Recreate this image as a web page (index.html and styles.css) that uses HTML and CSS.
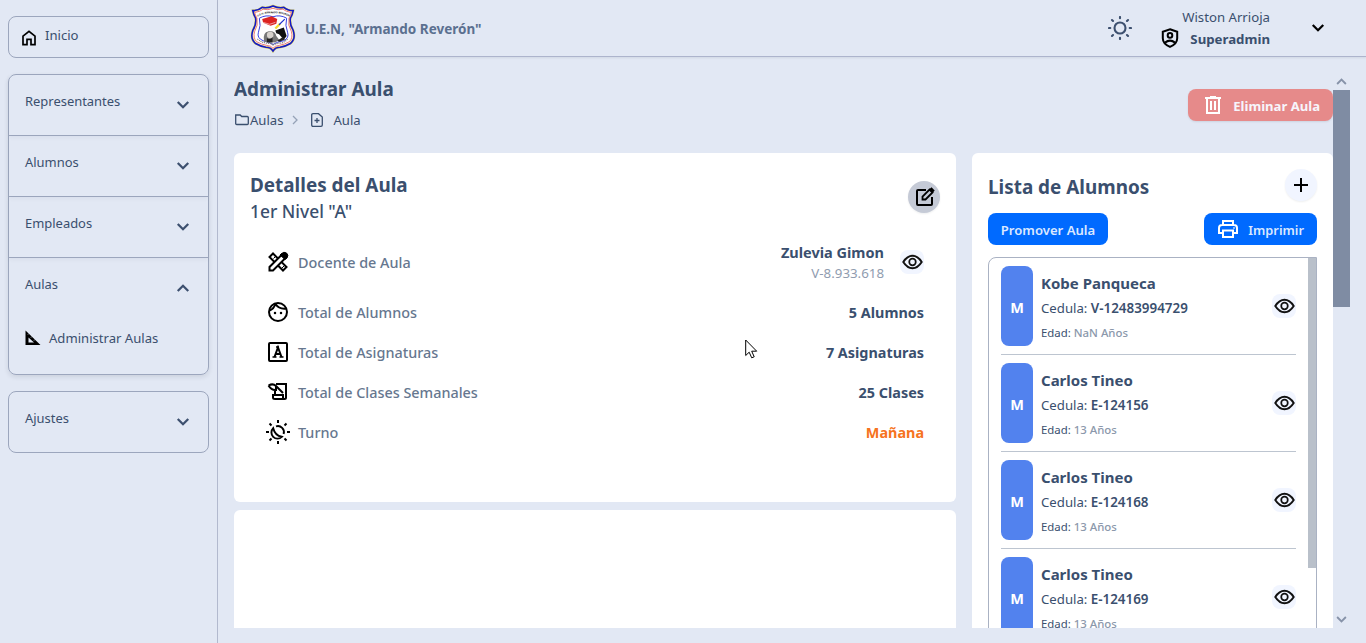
FILE: index.html
```html
<!DOCTYPE html>
<html lang="es">
<head>
<meta charset="utf-8">
<title>Administrar Aula</title>
<link rel="stylesheet" href="styles.css">
</head>
<body>
<svg class="defs" aria-hidden="true">
  <symbol id="down" viewBox="0 0 24 24"><path d="M5 8l7 7 7-7" fill="none" stroke="currentColor" stroke-width="3"/></symbol>
  <symbol id="eye" viewBox="0 0 32 24"><path d="M2 12Q8 2.500 16 2.500T30 12Q24 21.500 16 21.500T2 12Z" fill="none" stroke="currentColor" stroke-width="3"/><circle cx="16" cy="12" r="5" fill="none" stroke="currentColor" stroke-width="2.600"/></symbol>
</svg>
<div class="app">
  <aside class="sidebar">
    <a class="home">
      <svg class="i16" viewBox="0 0 16 16"><path d="M2 6.1L8 1.3l6 4.8v8.6h-4V9.3H6v5.4H2z" fill="none" stroke="#000" stroke-width="1.7"/></svg>
      <span>Inicio</span>
    </a>
    <nav class="accordion">
      <div class="item"><span>Representantes</span><svg class="chev"><use href="#down"/></svg></div>
      <div class="item"><span>Alumnos</span><svg class="chev"><use href="#down"/></svg></div>
      <div class="item"><span>Empleados</span><svg class="chev"><use href="#down"/></svg></div>
      <div class="item open"><span>Aulas</span><svg class="chev up"><use href="#down"/></svg></div>
      <div class="sub"><svg class="i16" viewBox="0 0 16 16"><path d="M.5 .5V15h15zM3.500 7.500l5.500 5h-5.500z" fill="#000" fill-rule="evenodd"/><path d="M3 4.500l1-1M6 7.500l1-1M9 10.500l1-1" stroke="#e2e8f4" stroke-width=".8"/></svg><span>Administrar Aulas</span></div>
    </nav>
    <div class="item single"><span>Ajustes</span><svg class="chev"><use href="#down"/></svg></div>
  </aside>
  <div class="page">
    <header class="topbar">
      <svg class="crest" viewBox="-1 0 49 50">
        <path d="M2 6Q8 6 12 2.500Q17 4 23.500 1Q30 4 35 2.500Q39 6 45 6Q44 11 42 14Q41 21 45 27Q48 36 42 41Q37 44 31 45Q26 45 23.500 49Q21 45 16 45Q10 44 5 41Q-1 36 2 27Q6 21 5 14Q3 11 2 6Z" fill="#fff" stroke="#e8e35e" stroke-width="2.600"/>
        <path d="M2 6Q8 6 12 2.500Q17 4 23.500 1Q30 4 35 2.500Q39 6 45 6Q44 11 42 14Q41 21 45 27Q48 36 42 41Q37 44 31 45Q26 45 23.500 49Q21 45 16 45Q10 44 5 41Q-1 36 2 27Q6 21 5 14Q3 11 2 6Z" fill="none" stroke="#1519ca" stroke-width="1.700"/>
        <path d="M4 8Q10 7 13 4.500Q18 6 23.500 3.500Q29 6 34 4.500Q37 7 43 8Q42 12 40.500 14Q39 22 43 28Q45 35 41 39Q36 42 30 43Q26 43 23.500 46Q21 43 17 43Q11 42 6 39Q2 35 4 28Q8 22 6.500 14Q5 12 4 8Z" fill="#fff" stroke="#e54b56" stroke-width=".8"/>
        <path d="M9 14Q16 10 23.500 12.500Q31 10 38 14Q36 22 39 29Q41 35 35 38Q28 39 23.500 42Q19 39 13 38Q6 35 8 29Q11 22 9 14Z" fill="#fff" stroke="#2a35e0" stroke-width="1"/>
        <path d="M12 15l10-3 6 3-1 5-6 2-8-3z" fill="#dd2321"/><path d="M13 18.500l7 2 6-2" fill="none" stroke="#fff" stroke-width=".6"/>
        <path d="M26 25l5-5" stroke="#f3db30" stroke-width="2.400"/><path d="M30 21l6-6" stroke="#1c2ecf" stroke-width="1.200"/>
        <path d="M26 27l9-3 3 9-3 4-5-6-3-1z" fill="#101112"/>
        <path d="M14 39q-2-10 5-11t8 5l3 4-4 3z" fill="#777"/><circle cx="20.500" cy="32" r="3.500" fill="#d7d2cd"/><path d="M17 35q4 3 6-1v6h-6zM28 38l6-4 2 3-6 2z" fill="#222"/>
        <path id="arc" d="M7 12.500Q15 8 23.500 9Q32 8 41 12.500" fill="none"/><text class="crest-text"><textPath href="#arc">U.E.N. ARMANDO REVERON</textPath></text>
        <path d="M7 36q4 4 10 4.500t6.500 2q4-2 8-2t8-5" fill="none" stroke="#777" stroke-width="1.200" stroke-dasharray="1.200 .8"/>
      </svg>
      <strong class="school">U.E.N, "Armando Reverón"</strong>
      <svg class="sun" viewBox="0 0 24 24"><circle cx="12" cy="12" r="5.500"/><path d="M12 1v1.300M12 21.700v1.300M1 12h1.300M21.700 12h1.300M4 4l1 1M19 19l1 1M4 20l1-1M19 5l1-1"/></svg>
      <div class="user">
        <span class="user-name">Wiston Arrioja</span>
        <div class="role"><svg viewBox="0 0 18 20"><path d="M9 1.200l7.200 2.500v6.500q0 5.500-7.200 8.600-7.200-3.100-7.200-8.600V3.700z"/><circle cx="9" cy="7.400" r="2.300"/><path d="M4 14.600q5-4 10 0"/></svg><strong>Superadmin</strong></div>
      </div>
      <svg class="user-chev"><use href="#down"/></svg>
    </header>
    <main class="scroller">
      <div class="content">
        <div class="heading">
          <div>
            <h1>Administrar Aula</h1>
            <div class="crumbs">
              <svg class="folder" viewBox="0 0 14 12"><path d="M.7 10V1h4.500l1.500 1.500h5.600q1 0 1 1V9.500q0 1-1 1H1.700q-1 0-1-1z"/></svg><span>Aulas</span>
              <svg class="sep" viewBox="0 0 6 10"><path d="M1 1l4 4-4 4"/></svg>
              <svg class="doc" viewBox="0 0 12 14"><path d="M2 .7h5.500L11.300 4v8q0 1.300-1.300 1.300H2Q.7 13.300.7 12V2Q.7.7 2 .7zM6 5v5M3.500 7.500h5"/></svg><span>Aula</span>
            </div>
          </div>
          <button class="btn danger"><svg class="trash" viewBox="0 0 16 18"><path d="M0 2h16M5 1h6M2 2v15h12V2M6 5v9M10 5v9"/></svg><span>Eliminar Aula</span></button>
        </div>
        <div class="grid">
          <div class="left">
            <section class="card details">
              <div class="card-head">
                <div><h2>Detalles del Aula</h2><p>1er Nivel "A"</p></div>
                <span class="round edit"><svg viewBox="0 0 20 20"><path d="M11 3H3Q2 3 2 4v13q0 1 1 1H16q1 0 1-1V10" fill="none" stroke="#000" stroke-width="2"/><path d="M7.500 12.500v-3l7-7 3 3-7 7z" fill="#c5cad6" stroke="#000" stroke-width="1.800"/><path d="M14 2.500L16.500 .3l3.200 3.200L17.500 6z"/></svg></span>
              </div>
              <dl>
                <div class="row tall">
                  <dt><svg viewBox="0 0 24 24"><g fill="#fff" stroke="#000" stroke-width="2"><path d="M7 3.500L3.500 7 17 20.500l3.500-3.500z"/><path d="M3.500 20.500v-3.500L16 4.500l3.500 3.500L7 20.500z"/></g><path d="M15 4q3-3 5.500-1t.5 5l-2 1.500L14 5zM7.500 8.500l2-2M16 18l2-2" stroke="#000"/></svg>Docente de Aula</dt>
                  <dd class="teacher"><span><b>Zulevia Gimon</b><small>V-8.933.618</small></span><span class="eye"><svg><use href="#eye"/></svg></span></dd>
                </div>
                <div class="row"><dt><svg viewBox="0 0 24 24"><g fill="none" stroke="#000" stroke-width="2"><circle cx="12" cy="12" r="9"/><path d="M9.500 3.500Q8 9 3.500 10.500M9.500 4Q13 9.500 20.500 8.500"/></g><circle cx="9" cy="13" r="1.250"/><circle cx="15" cy="13" r="1.250"/></svg>Total de Alumnos</dt><dd>5 Alumnos</dd></div>
                <div class="row"><dt><svg viewBox="0 0 24 24"><g fill="none" stroke="#000"><rect x="3" y="3" width="18" height="18" rx="1" stroke-width="2"/><path d="M8.500 17L12 7.500l3.500 9.500M9.500 14h5" stroke-width="2"/><path d="M6.500 17h4M13.500 17h4M10 7h3" stroke-width="1.500"/></g></svg>Total de Asignaturas</dt><dd>7 Asignaturas</dd></div>
                <div class="row"><dt><svg viewBox="0 0 24 24"><g fill="none" stroke="#000" stroke-width="2"><path d="M10 4h10v13.500q0 1.500-1.500 1.500H9q-2 0-2-1.500V15h10v2.500q0 1.500 2 1.500"/><path d="M9 15v-5M2.500 5.500q4.500-2.500 7.500.5l7 7M2.500 5.500q3 5 7.500 4.500V6"/></g></svg>Total de Clases Semanales</dt><dd>25 Clases</dd></div>
                <div class="row"><dt><svg viewBox="0 0 24 24"><path d="M10 6.400a6 6 0 0 1 7.600 7.600M7.200 8.200a6 6 0 0 0 8.600 8.600Q9 15.500 7.200 8.200z" fill="none" stroke="#000" stroke-width="1.900"/><path d="M12 0v3M12 21v3M0 12h3M21 12h3M3.500 3.500l2 2M18.500 18.500l2 2M3.500 20.500l2-2M18.500 5.500l2-2" stroke="#000" stroke-width="2"/></svg>Turno</dt><dd class="orange">Mañana</dd></div>
              </dl>
            </section>
            <section class="card blank"></section>
          </div>
          <section class="card students">
            <div class="students-head"><h2>Lista de Alumnos</h2><span class="round plus"><svg viewBox="0 0 14 14"><path d="M7 0v14M0 7h14"/></svg></span></div>
            <div class="actions"><button class="btn promote"><span>Promover Aula</span></button><button class="btn print"><svg viewBox="0 0 20 18"><path d="M5 5V1h10v4M5 13H1V8q0-3 3-3h12q3 0 3 3v5h-4M5 10.500h10V17H5zM15.500 8h1"/></svg><span>Imprimir</span></button></div>
            <div class="list">
              <ul>
                <li><b class="badge">M</b><div class="info"><h3>Kobe Panqueca</h3><p>Cedula: <b>V-12483994729</b></p><small>Edad: <i>NaN Años</i></small></div><span class="eye"><svg><use href="#eye"/></svg></span></li>
                <li><b class="badge">M</b><div class="info"><h3>Carlos Tineo</h3><p>Cedula: <b>E-124156</b></p><small>Edad: <i>13 Años</i></small></div><span class="eye"><svg><use href="#eye"/></svg></span></li>
                <li><b class="badge">M</b><div class="info"><h3>Carlos Tineo</h3><p>Cedula: <b>E-124168</b></p><small>Edad: <i>13 Años</i></small></div><span class="eye"><svg><use href="#eye"/></svg></span></li>
                <li><b class="badge">M</b><div class="info"><h3>Carlos Tineo</h3><p>Cedula: <b>E-124169</b></p><small>Edad: <i>13 Años</i></small></div><span class="eye"><svg><use href="#eye"/></svg></span></li>
              </ul>
              <div class="thumb"></div>
            </div>
          </section>
        </div>
      </div>
      <div class="scrollbar"><svg class="up"><use href="#down"/></svg><div class="bar"></div><svg><use href="#down"/></svg></div>
    </main>
  </div>
</div>
<svg class="cursor" viewBox="0 0 13 20"><path d="M.7 1v15.500l3.500-3.300 2.500 5.600 2.500-1-2.500-5.600h5z" fill="#fff" stroke="#000"/></svg>
</body>
</html>
```
FILE: styles.css
```css
* { box-sizing: border-box; }
body, h1, h2, h3, p, dl, dd, ul { margin: 0; padding: 0; }
body { font-family: "Noto Sans", "Open Sans", sans-serif; font-size: 13.1px; color: #3a4f6e; background: #e2e8f4; overflow: hidden; }
svg { display: block; flex: none; }
.defs { position: absolute; width: 0; height: 0; }
.app { display: flex; height: 643px; }
.sidebar { width: 218px; flex: none; border-right: 1px solid #b2b9ce; padding: 16px 8px; display: flex; flex-direction: column; gap: 16px; line-height: 20px; }
.home, .accordion, .single { border: 1px solid #9ca6bd; border-radius: 8px; }
.home { height: 42px; padding: 0 12px; display: flex; align-items: center; gap: 8px; }
.home span { margin-top: -4px; }
.home svg { margin-top: 1px; }
.i16 { width: 16px; height: 16px; }
.accordion { height: 301px; box-shadow: 0 2px 5px #0f172a1c; }
.item { height: 61px; padding: 16px 16px 0; display: flex; justify-content: space-between; border-bottom: 1px solid #9ca6bd; box-shadow: 0 2px 4px #0f172a0a; font-size: 12.95px; }
.item.open { border: 0; box-shadow: none; }
.item.single { height: 62px; border: 1px solid #9ca6bd; box-shadow: none; }
.chev { width: 18px; height: 18px; margin: 5px 0 0; color: #3d506f; }
.up { transform: rotate(180deg); }
.sub { display: flex; align-items: center; gap: 8px; padding: 9px 16px; }
.page { flex: 1; min-width: 0; }
.topbar { height: 57px; border-bottom: 1px solid #adb4cc; display: flex; align-items: center; padding: 0 39px 0 31px; box-shadow: 0 1px 2px #0f172a14; }
.crest { width: 48px; height: 47px; overflow: visible; }
.crest-text { font-size: 2.6px; font-weight: 700; fill: #111; }
.school { font-size: 13.5px; margin-left: 8px; margin-top: 1px; color: #5b7090; }
.sun { width: 24px; height: 24px; margin-left: auto; fill: none; stroke: #3d506f; stroke-width: 2.1; stroke-linecap: round; }
.user { margin-left: 29px; width: 109px; text-align: right; line-height: 22px; }
.user-name { font-size: 13.2px; }
.role { display: flex; justify-content: space-between; align-items: center; font-size: 13.25px; }
.role svg { width: 18px; height: 20px; margin-top: -2px; fill: none; stroke: #000; stroke-width: 2; }
.user-chev { width: 18px; height: 18px; margin-left: 39px; color: #000; }
.scroller { display: flex; height: 555px; margin: 16px 16px 0; overflow: hidden; }
.content { flex: 1; min-width: 0; height: 555px; overflow: hidden; }
.scrollbar { width: 17px; display: flex; flex-direction: column; align-items: center; color: #8793a9; }
.scrollbar svg { width: 15px; height: 17px; }
.scrollbar svg:last-child { margin-top: auto; }
.bar { width: 17px; height: 217px; background: #7f8ca3; }
.heading { height: 80px; display: flex; justify-content: space-between; align-items: flex-start; }
h1, h2 { font-size: 18.9px; line-height: 32px; font-weight: 700; }
.crumbs { display: flex; align-items: center; margin-top: 5px; line-height: 20px; }
.crumbs svg { fill: none; stroke: currentColor; stroke-width: 1.3; }
.folder { width: 14px; height: 12px; margin: 0 1px; }
.sep { width: 6px; height: 10px; margin: 0 13px 0 9px; opacity: .45; }
.doc { width: 12px; height: 14px; margin-right: 10px; }
.btn { display: flex; align-items: center; justify-content: center; height: 32px; border: 0; border-radius: 8px; padding: 0 13px; font: 600 13.1px "Noto Sans", sans-serif; color: #dbe8ff; background: #006aff; }
.btn span { margin-top: 2px; }
.btn svg { fill: none; stroke: #fff; stroke-width: 2; }
.danger { width: 145px; margin-top: 16px; background: #e68a8a; color: #f7f5fb; font-weight: 700; gap: 12px; justify-content: flex-end; padding: 0 13px 0 0; box-shadow: 0 1px 2px #0f172a18; }
.trash { width: 16px; height: 18px; }
.grid { display: grid; grid-template-columns: 722px 361px; gap: 16px; }
.card { background: #fff; border-radius: 6px; }
.left { display: flex; flex-direction: column; gap: 8px; }
.details { height: 349px; padding: 16px; }
.blank { height: 240px; }
.card-head { display: flex; justify-content: space-between; height: 73px; }
.card-head p { font-size: 17.4px; line-height: 20px; font-weight: 500; }
.round { width: 32px; height: 32px; border-radius: 50%; display: flex; align-items: center; justify-content: center; box-shadow: 0 1px 2px #0f172a12; }
.edit { background: #c5cad6; margin-top: 12px; }
.edit svg { width: 20px; height: 20px; margin-left: 1px; }
dl { padding: 0 16px; display: flex; flex-direction: column; gap: 16px; }
.row { height: 24px; display: flex; justify-content: space-between; align-items: center; }
.tall { height: 40px; margin-bottom: 2px; }
dt { display: flex; align-items: center; gap: 8px; font-size: 14.4px; font-weight: 500; color: #66778f; }
dt svg { width: 24px; height: 24px; }
dd, dd b { font-size: 14.4px; font-weight: 700; }
.teacher { display: flex; align-items: center; gap: 16px; text-align: right; }
.teacher b, .teacher small { display: block; line-height: 21px; }
.teacher b { font-size: 14.5px; }
.teacher > span:first-child { padding-top: 2px; }
.teacher small { font-size: 13.3px; font-weight: 400; color: #909caf; }
.orange { color: #f67320; }
.eye { width: 24px; height: 24px; border-radius: 8px; background: #f1f5ff; display: flex; align-items: center; justify-content: center; color: #111; }
.eye svg { width: 21px; height: 16px; margin-top: -1px; }
.students { padding: 16px 16px 0; height: 600px; }
.students-head { display: flex; justify-content: space-between; height: 44px; }
.students-head h2 { padding-top: 2px; }
.plus { background: #f1f5ff; }
.plus svg { width: 14px; height: 14px; stroke: #000; stroke-width: 2; }
.actions { display: flex; justify-content: space-between; }
.promote { width: 120px; padding: 0; }
.print { width: 113px; gap: 10px; justify-content: flex-end; padding: 0 13px 0 0; font-size: 12.8px; }
.print svg { width: 20px; height: 18px; }
.list { margin-top: 12px; height: 500px; border: 1px solid #aab2c3; border-radius: 8px 0 0 0; display: flex; }
ul { flex: 1; list-style: none; padding: 0 12px; }
li { height: 97px; padding: 8px 0; border-bottom: 1px solid #bdc5d0; display: flex; }
.badge { width: 32px; height: 80px; border-radius: 8px; background: #5282ee; color: #fff; display: flex; align-items: center; justify-content: center; font-size: 14.5px; padding-top: 2px; }
.info { margin-left: 8px; flex: 1; white-space: nowrap; padding-top: 5px; }
h3 { font-size: 15px; line-height: 25px; }
.info p { line-height: 24px; font-size: 13.2px; }
.info p b { font-weight: 600; font-size: 13.4px; }
.info small { display: block; font-size: 11.4px; line-height: 25px; }
i { font-style: normal; font-weight: 500; color: #8b98ab; }
li .eye { margin-top: 28px; }
.thumb { width: 8px; height: 310px; background: #b9c0ca; }
.cursor { position: absolute; left: 745px; top: 339px; width: 13px; height: 20px; }
```
